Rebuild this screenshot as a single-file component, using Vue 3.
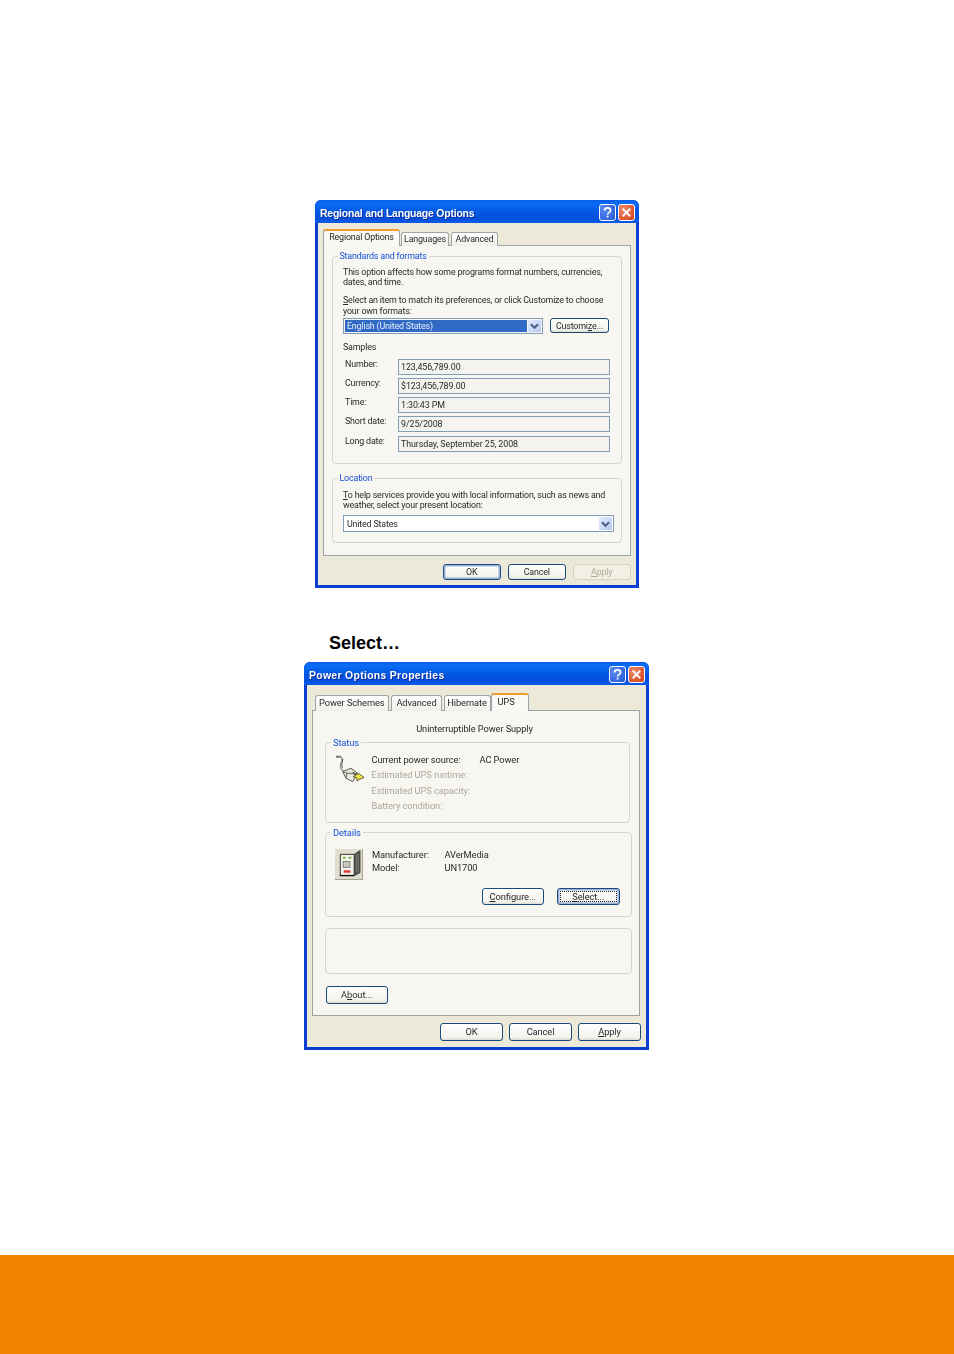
<script setup>
const samples = [
  { label: 'Number:', value: '123,456,789.00' },
  { label: 'Currency:', value: '$123,456,789.00' },
  { label: 'Time:', value: '1:30:43 PM' },
  { label: 'Short date:', value: '9/25/2008' },
  { label: 'Long date:', value: 'Thursday, September 25, 2008' }
]
const statusRows = [
  { label: 'Current power source:', value: 'AC Power', off: false },
  { label: 'Estimated UPS runtime:', value: '', off: true },
  { label: 'Estimated UPS capacity:', value: '', off: true },
  { label: 'Battery condition:', value: '', off: true }
]
</script>

<template>
  <div class="page">
    <section class="win win-a">
      <header class="title">
        <span class="title-text">Regional and Language Options</span>
        <span class="cap cap-help"><svg viewBox="0 0 18 18"><path d="M5.600 6.500c0-2 1.500-3 3.500-3s3.500 1.100 3.500 3c0 2.700-3.500 2.500-3.500 5" fill="none" stroke="#fff" stroke-width="2"/><rect x="8" y="12.800" width="2.200" height="2.200" fill="#fff"/></svg></span>
        <span class="cap cap-close"><svg viewBox="0 0 18 18"><path d="M4.500 4.500l9 9M13.500 4.500l-9 9" fill="none" stroke="#fff" stroke-width="2.200"/></svg></span>
      </header>
      <div class="client">
        <div class="tabs a-tabs">
          <span class="tab active a-t1">Regional Options</span>
          <span class="tab a-t2">Languages</span>
          <span class="tab a-t3">Advanced</span>
        </div>
        <div class="panel a-panel">
          <div class="group a-std">
            <span class="legend a-leg">Standards and formats</span>
            <p class="para a-p1">This option affects how some programs format numbers, currencies,<br>dates, and time.</p>
            <p class="para a-p2"><u>S</u>elect an item to match its preferences, or click Customize to choose<br>your own formats:</p>
            <div class="a-comborow">
              <div class="combo a-combo">
                <span class="combo-sel">English (United States)</span>
                <span class="arrow"><svg viewBox="0 0 10 10"><path d="M2 3.500l3 3 3-3" fill="none" stroke="#4d6185" stroke-width="1.800"/></svg></span>
              </div>
              <span class="btn a-cust">Customi<u>z</u>e...</span>
            </div>
            <div class="a-samples">Samples</div>
            <div class="a-rows">
              <div v-for="s in samples" :key="s.label" class="a-row">
                <span class="a-lab">{{ s.label }}</span>
                <span class="field">{{ s.value }}</span>
              </div>
            </div>
          </div>
          <div class="group a-loc">
            <span class="legend a-leg">Location</span>
            <p class="para a-p3"><u>T</u>o help services provide you with local information, such as news and<br>weather, select your present location:</p>
            <div class="combo white a-locc">
              <span class="combo-txt">United States</span>
              <span class="arrow"><svg viewBox="0 0 10 10"><path d="M2 3.500l3 3 3-3" fill="none" stroke="#4d6185" stroke-width="1.800"/></svg></span>
            </div>
          </div>
        </div>
        <div class="foot a-foot">
          <span class="btn def a-b">OK</span>
          <span class="btn a-b">Cancel</span>
          <span class="btn off a-b"><u>A</u>pply</span>
        </div>
      </div>
    </section>

    <h2 class="select-h">Select…</h2>

    <section class="win win-b">
      <header class="title">
        <span class="title-text b-title">Power Options Properties</span>
        <span class="cap cap-help"><svg viewBox="0 0 18 18"><path d="M5.600 6.500c0-2 1.500-3 3.500-3s3.500 1.100 3.500 3c0 2.700-3.500 2.500-3.500 5" fill="none" stroke="#fff" stroke-width="2"/><rect x="8" y="12.800" width="2.200" height="2.200" fill="#fff"/></svg></span>
        <span class="cap cap-close"><svg viewBox="0 0 18 18"><path d="M4.500 4.500l9 9M13.500 4.500l-9 9" fill="none" stroke="#fff" stroke-width="2.200"/></svg></span>
      </header>
      <div class="client">
        <div class="tabs b-tabs">
          <span class="tab b-t1">Power Schemes</span>
          <span class="tab b-t2">Advanced</span>
          <span class="tab b-t3">Hibernate</span>
          <span class="tab active b-t4">UPS</span>
        </div>
        <div class="panel b-panel">
          <div class="b-head">Uninterruptible Power Supply</div>
          <div class="group b-status">
            <span class="legend b-leg">Status</span>
            <svg class="plug" viewBox="0 0 50 40">
              <path d="M10 7.300h4.500c2 0 2 2 1 4.500s-2 5 0 7.500l3 3" fill="none" stroke="#9a9a90" stroke-width="1.600"/>
              <path d="M10 6.300h5M17 9c-.5 3-2 6-.5 9" fill="none" stroke="#2e2e2a" stroke-width=".7"/>
              <path d="M16.700 21.700L25 18.300l6.700 5-5 8.400-6.700-3.400z" fill="#e6e6dc" stroke="#4c4c46" stroke-width=".9"/>
              <path d="M20 28.300l1-5 10.700.3M21 23.300l-4.300-1.600" fill="none" stroke="#4c4c46" stroke-width=".8"/>
              <path d="M27 22l1.500 2.500 5-.5 4.500 3.500-5 2-2 1.500v-3l-4-1.500 2.500-1z" fill="#f2ea3c" stroke="#3e3e2c" stroke-width=".8"/>
            </svg>
            <div class="b-srows">
              <div v-for="r in statusRows" :key="r.label" class="b-srow" :class="{ dim: r.off }">
                <span class="b-slab">{{ r.label }}</span><span>{{ r.value }}</span>
              </div>
            </div>
          </div>
          <div class="group b-details">
            <span class="legend b-leg">Details</span>
            <div class="b-dtop">
              <span class="upsbox">
                <svg viewBox="0 0 28 31">
                  <path d="M5.500 5.500h14.500v22H5.500z" fill="#f3f3ee" stroke="#30302c"/>
                  <path d="M20 5.500l6-4v23l-6 3z" fill="#55554f" stroke="#30302c" stroke-width=".7"/>
                  <path d="M22 6v18M24 5v19" stroke="#a5a59c" stroke-dasharray="1 1"/>
                  <path d="M8 8h3v2H8zM14 8h3v2h-3z" fill="#7ab648"/>
                  <rect x="8.500" y="13" width="7" height="6" fill="#c9c9c0" stroke="#6b6b64" stroke-width=".8"/>
                  <rect x="9" y="22" width="7" height="2.500" fill="#e8352c"/>
                  <path d="M5 27.500h15" stroke="#111" stroke-width="1.400"/>
                </svg>
              </span>
              <div class="b-dtext">
                <div class="b-drow"><span class="b-dlab">Manufacturer:</span><span>AVerMedia</span></div>
                <div class="b-drow"><span class="b-dlab">Model:</span><span>UN1700</span></div>
              </div>
            </div>
            <div class="b-dbtns">
              <span class="btn b-b"><u>C</u>onfigure...</span>
              <span class="btn def focus b-b"><u>S</u>elect...</span>
            </div>
          </div>
          <div class="group b-empty"></div>
          <span class="btn b-b b-about">A<u>b</u>out...</span>
        </div>
        <div class="foot b-foot">
          <span class="btn b-f">OK</span>
          <span class="btn b-f">Cancel</span>
          <span class="btn b-f"><u>A</u>pply</span>
        </div>
      </div>
    </section>

    <footer class="band"></footer>
  </div>
</template>

<style scoped>
.page {
  height: 1354px;
  width: 954px;
  display: flex;
  flex-direction: column;
  align-items: flex-start;
  background: #fff;
  font-family: Roboto, "Liberation Sans", Arial, sans-serif;
  font-size: 9.300px;
  color: #2a2a2a;
  overflow: hidden;
}
u { text-underline-offset: 1px; text-decoration-thickness: 1px; }
.win {
  box-sizing: border-box;
  height: 388px;
  display: flex;
  flex-direction: column;
  background: #0a3fd0;
  border-radius: 6px 6px 0 0;
  padding: 0 3px 3px;
  filter: blur(.25px);
}
.win-a { width: 324px; margin: 200px 0 0 315px; font-size: 8.900px; letter-spacing: -.17px; }
.win-b { width: 345px; margin: 10px 0 0 304px; letter-spacing: -.1px; }
.title {
  height: 23px;
  box-sizing: border-box;
  flex: none;
  margin: 0 -3px;
  padding: 2px 4px 0 5px;
  display: flex;
  align-items: center;
  gap: 2px;
  border-radius: 6px 6px 0 0;
  background: linear-gradient(#0a5ce6 0, #0a6cf5 15%, #0456e0 55%, #0550dc 80%, #0a5ae8 100%);
}
.title-text {
  flex: 1;
  display: block;
  padding-top: 1px;
  font-family: "Liberation Sans", Arial, sans-serif;
  font-weight: 700;
  font-size: 10.400px;
  letter-spacing: -.17px;
  color: #fff;
  text-shadow: 1px 1px 0 #0a2f9a;
}
.b-title { letter-spacing: .33px; }
.cap {
  box-sizing: border-box;
  width: 17px;
  height: 17px;
  border: 1px solid #fff;
  border-radius: 3px;
  display: block;
}
.cap svg { display: block; width: 100%; height: 100%; }
.cap-help { background: radial-gradient(circle at 30% 30%, #5c8cf0, #2256d8); }
.cap-close { background: radial-gradient(circle at 30% 30%, #ee8c6c, #d23c12); }
.client {
  flex: 1;
  min-height: 0;
  display: flex;
  flex-direction: column;
  background: #ece9d8;
  padding: 0 5px;
}
.tabs { display: flex; align-items: flex-end; position: relative; z-index: 1; }
.tab {
  box-sizing: border-box;
  display: flex;
  align-items: center;
  justify-content: center;
  background: linear-gradient(#fff, #f0efe8);
  border: 1px solid #9aa5a8;
  border-bottom: 0;
  border-radius: 3px 3px 0 0;
  white-space: nowrap;
}
.tab.active {
  background: #f9f8f4;
  border-top: 2px solid #ee9b32;
  padding-bottom: 3px;
}
.panel {
  box-sizing: border-box;
  border: 1px solid #9aa5a8;
  background: #f7f6f1;
  display: flex;
  flex-direction: column;
}
.group {
  box-sizing: border-box;
  position: relative;
  border: 1px solid #d8d6c8;
  border-radius: 4px;
  flex: none;
}
.legend {
  position: absolute;
  top: -6px;
  background: #f7f6f1;
  color: #1550d8;
  padding: 0 2px;
  line-height: 11px;
}
.para { margin: 0; line-height: 10.200px; white-space: nowrap; }
.btn {
  box-sizing: border-box;
  display: flex;
  align-items: center;
  justify-content: center;
  background: linear-gradient(#fff, #f3f2ec 85%, #dcd8cc);
  border: 1px solid #1a4a7c;
  border-radius: 3px;
  flex: none;
}
.btn.def { box-shadow: inset 0 0 0 1.500px #9cb4dc; }
.btn.off { border-color: #d6d3c2; color: #aca899; background: #f2f0e4; box-shadow: none; }
.btn.focus { position: relative; }
.btn.focus::after {
  content: "";
  position: absolute;
  inset: 2px;
  border: 1px dotted #222;
}
.combo {
  box-sizing: border-box;
  border: 1px solid #7f9db9;
  display: flex;
  align-items: center;
  padding: 1px;
}
.combo.white { background: #fff; }
.combo-sel {
  flex: 1;
  align-self: stretch;
  display: flex;
  align-items: center;
  background: #316ac5;
  color: #e8eefa;
  padding-left: 2px;
}
.combo-txt { flex: 1; padding-left: 2px; }
.arrow {
  width: 13px;
  align-self: stretch;
  margin-left: 1px;
  background: linear-gradient(135deg, #e4ecfc, #b6c9f2);
  border-radius: 1px;
  display: flex;
  align-items: center;
}
.arrow svg { width: 13px; height: 12px; display: block; }
.field {
  box-sizing: border-box;
  display: flex;
  align-items: center;
  width: 212px;
  height: 16px;
  border: 1px solid #7f9db9;
  background: #f4f3ee;
  padding-left: 2px;
  white-space: nowrap;
  letter-spacing: -.08px;
}

/* Regional dialog */
.a-tabs { height: 23px; padding-top: 6px; box-sizing: border-box; margin-bottom: -1px; }
.a-t1 { width: 77px; height: 17px; margin-right: 1px; }
.a-t2 { width: 48px; height: 14.500px; margin-right: 2px; }
.a-t3 { width: 47px; height: 14.500px; }
.a-panel { height: 311px; padding: 10px 8px 0 8px; gap: 14px; }
.a-std { height: 208px; padding: 10px 10px 0 10px; }
.a-leg { left: 4.500px; }
.a-p2 { margin-top: 8px; }
.a-comborow { display: flex; gap: 7px; align-items: center; margin-top: 2px; }
.a-combo { width: 200px; height: 16px; }
.a-cust { width: 59px; height: 15px; }
.a-samples { margin-top: 8px; line-height: 10px; }
.a-rows { display: flex; flex-direction: column; gap: 3.200px; margin-top: 7px; }
.a-row { display: flex; height: 16px; }
.a-lab { width: 55px; padding-left: 2px; box-sizing: border-box; line-height: 10px; white-space: nowrap; }
.a-loc { height: 65px; padding: 11px 10px 0 10px; }
.a-locc { width: 271px; height: 17px; margin-top: 5px; }
.a-foot { display: flex; justify-content: flex-end; gap: 6.500px; margin-top: 7.500px; }
.a-b { width: 58.500px; height: 16.500px; }

/* Select heading */
.select-h {
  margin: 46px 0 0 329px;
  font-family: "Liberation Sans", Arial, sans-serif;
  font-size: 18px;
  line-height: 18px;
  font-weight: 700;
  color: #000;
  height: 18px;
}

/* Power dialog */
.b-tabs { height: 25.500px; padding-top: 8px; box-sizing: border-box; margin-bottom: -1px; padding-left: 2.500px; }
.b-t1 { width: 74.500px; height: 16px; margin-right: 2px; padding-bottom: 1px; }
.b-t2 { width: 51px; height: 16px; margin-right: 1.500px; padding-bottom: 1px; }
.b-t3 { width: 47px; height: 16px; padding-bottom: 1px; }
.b-t4 { width: 38px; height: 18px; margin-left: .500px; padding-right: 8px; }
.b-panel { width: 328px; height: 306px; padding-left: 12px; margin-left: -.500px; }
.b-head { text-align: center; line-height: 11px; margin-top: 12px; width: 300px; }
.b-status { width: 305px; height: 81px; margin-top: 8.500px; }
.b-leg { left: 5.500px; }
.plug { position: absolute; left: 0; top: 7px; width: 50px; height: 40px; }
.b-srows { padding: 11px 0 0 46px; display: flex; flex-direction: column; gap: 4.300px; }
.b-srow { display: flex; line-height: 11px; }
.b-slab { width: 108px; white-space: nowrap; }
.dim { color: #aca899; }
.b-details { width: 307px; height: 85.500px; margin-top: 8.500px; padding: 10px 11px 0 9.500px; }
.b-dtop { display: flex; height: 35px; }
.upsbox {
  width: 28px;
  height: 31px;
  display: block;
  flex: none;
  margin-top: 6px;
  background: #dfddcd;
  border-right: 1px solid #a5a396;
  border-bottom: 1px solid #a5a396;
  box-sizing: border-box;
}
.upsbox svg { display: block; width: 100%; height: 100%; }
.b-dtext { margin-left: 9px; padding-top: 5px; }
.b-drow { display: flex; line-height: 13.200px; }
.b-dlab { width: 72.500px; }
.b-dbtns { display: flex; justify-content: flex-end; gap: 13px; margin-top: 10px; }
.b-b { width: 62.500px; height: 17.500px; }
.b-f { width: 63px; height: 17.500px; }
.b-empty { width: 307px; height: 46px; margin-top: 10.500px; }
.b-about { margin: 12.500px 0 0 1px; }
.b-foot { display: flex; justify-content: flex-end; gap: 6px; margin-top: 7.500px; margin-right: 0; }

.band { margin-top: auto; width: 954px; height: 99px; background: #f08300; flex: none; }
</style>
